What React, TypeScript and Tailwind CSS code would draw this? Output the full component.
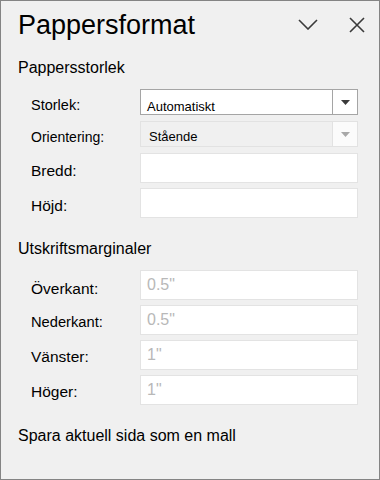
import React from "react";

const Triangle = ({ color }: { color: string }) => (
  <svg width="9" height="5" viewBox="0 0 9 5">
    <path d="M0 0 H9 L4.5 5 Z" fill={color} />
  </svg>
);

const Label = ({ text, size, pt }: { text: string; size: string; pt: string }) => (
  <div className={`w-[109px] shrink-0 text-black ${size} ${pt}`}>{text}</div>
);

const App = () => {
  return (
    <div
      className="w-[380px] h-[480px] border border-[#848484] bg-[#f0f0f0] pl-[17px] text-black"
      style={{ fontFamily: '"Liberation Sans", Arial, sans-serif' }}
    >
      <div className="flex items-center pt-[9px] h-[40px]">
        <h1 className="text-[27px] leading-[31px] flex-1">Pappersformat</h1>
        <div className="flex items-center gap-[31px] pr-[14px] pb-[2px]">
          <svg width="20" height="11" viewBox="0 0 20 11">
            <path d="M1 1 L10 10 L19 1" fill="none" stroke="#3a3a3a" strokeWidth="1.6" />
          </svg>
          <svg width="16" height="16" viewBox="0 0 16 16">
            <path d="M1 1 L15 15 M15 1 L1 15" fill="none" stroke="#3a3a3a" strokeWidth="1.6" />
          </svg>
        </div>
      </div>

      <div className="mt-[18px] text-[16px] leading-[18px]">Pappersstorlek</div>

      <div className="mt-[12px] pl-[13px] flex flex-col">
        <div className="flex items-center h-[26px]">
          <Label text="Storlek:" size="text-[14.5px]" pt="pt-[7px]" />
          <div className="w-[218px] h-[26px] flex border border-[#a5a5a5] bg-white">
            <div className="flex-1 flex items-center pl-[6px] pt-[9px] text-[13px] leading-[14px]">
              Automatiskt
            </div>
            <div className="w-[25px] flex items-center justify-center border-l border-[#a5a5a5]">
              <Triangle color="#3a3a3a" />
            </div>
          </div>
        </div>

        <div className="flex items-center h-[26px] mt-[6px]">
          <Label text="Orientering:" size="text-[14px]" pt="pt-[7px]" />
          <div className="w-[218px] h-[26px] flex border border-[#e2e2e2] bg-[#f0f0f0]">
            <div className="flex-1 flex items-center pl-[8px] pt-[5px] text-[13px] leading-[14px]">
              Stående
            </div>
            <div className="w-[25px] flex items-center justify-center border-l border-[#e2e2e2] bg-[#fbfbfb]">
              <Triangle color="#a8a8a8" />
            </div>
          </div>
        </div>

        {["Bredd:", "Höjd:"].map((t, i) => (
          <div key={t} className={`flex items-center h-[30px] ${i === 0 ? "mt-[6px]" : "mt-[5px]"}`}>
            <Label text={t} size="text-[15.5px]" pt="pt-[5px]" />
            <div className="w-[218px] h-[30px] border border-[#e3e3e3] bg-white" />
          </div>
        ))}
      </div>

      <div className="mt-[22px] text-[16px] leading-[18px]">Utskriftsmarginaler</div>

      <div className="mt-[12px] pl-[13px] flex flex-col gap-[5px]">
        {margins.map((m, i) => (
          <div key={m.label} className="flex items-center h-[30px]">
            <Label text={m.label} size={i === 1 ? "text-[14.7px]" : "text-[15.5px]"} pt={i === 0 ? "pt-[7px]" : "pt-[4px]"} />
            <div className="w-[218px] h-[30px] flex items-center pl-[6px] border border-[#e3e3e3] bg-white text-[16px] text-[#b8b8b8]">
              {m.value}
            </div>
          </div>
        ))}
      </div>

      <div className="mt-[22px] text-[16px] leading-[18px]">Spara aktuell sida som en mall</div>
    </div>
  );
};

export default App;

const margins = [
  { label: "Överkant:", value: "0.5\"" },
  { label: "Nederkant:", value: "0.5\"" },
  { label: "Vänster:", value: "1\"" },
  { label: "Höger:", value: "1\"" },
];
